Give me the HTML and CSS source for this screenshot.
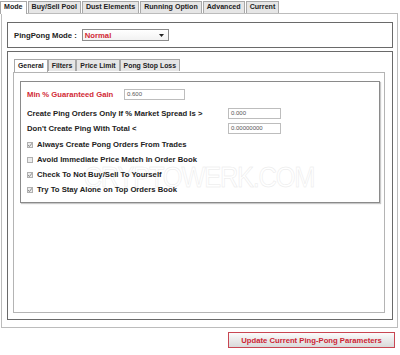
FILE: index.html
```html
<!DOCTYPE html>
<html>
<head>
<meta charset="utf-8">
<link rel="stylesheet" href="styles.css">
</head>
<body>
<div class="tabs">
  <div class="tab active">Mode</div>
  <div class="tab">Buy/Sell Pool</div>
  <div class="tab">Dust Elements</div>
  <div class="tab">Running Option</div>
  <div class="tab">Advanced</div>
  <div class="tab">Current</div>
</div>
<div class="panel">
  <div class="box mode-box">
    <span class="mode-label">PingPong Mode :</span>
    <div class="select">
      <span class="select-text">Normal</span>
      <svg class="arrow" width="5" height="3" viewBox="0 0 5 3"><path d="M0 0H5L2.5 3Z" fill="#222"/></svg>
    </div>
  </div>
  <div class="box main-box">
    <div class="subtabs">
      <div class="tab subtab active">General</div>
      <div class="tab subtab">Filters</div>
      <div class="tab subtab">Price Limit</div>
      <div class="tab subtab">Pong Stop Loss</div>
    </div>
    <div class="subpanel">
      <div class="content">
        <div class="watermark">CRYPTOWERK.COM</div>
        <div class="row">
          <span class="label label-short red">Min % Guaranteed Gain</span>
          <span class="input input-wide">0.600</span>
        </div>
        <div class="row row-gap">
          <span class="label">Create Ping Orders Only If % Market Spread Is &gt;</span>
          <span class="input">0.000</span>
        </div>
        <div class="row">
          <span class="label">Don't Create Ping With Total &lt;</span>
          <span class="input">0.00000000</span>
        </div>
        <div class="row cb-row cb-first">
          <span class="cb"><svg width="6" height="6" viewBox="0 0 6 6"><path d="M1 3L2.4 4.6L5 1.2" fill="none" stroke="#8a8a8a" stroke-width="1"/></svg></span>
          <span>Always Create Pong Orders From Trades</span>
        </div>
        <div class="row cb-row">
          <span class="cb"></span>
          <span>Avoid Immediate Price Match In Order Book</span>
        </div>
        <div class="row cb-row">
          <span class="cb"><svg width="6" height="6" viewBox="0 0 6 6"><path d="M1 3L2.4 4.6L5 1.2" fill="none" stroke="#8a8a8a" stroke-width="1"/></svg></span>
          <span>Check To Not Buy/Sell To Yourself</span>
        </div>
        <div class="row cb-row">
          <span class="cb"><svg width="6" height="6" viewBox="0 0 6 6"><path d="M1 3L2.4 4.6L5 1.2" fill="none" stroke="#8a8a8a" stroke-width="1"/></svg></span>
          <span>Try To Stay Alone on Top Orders Book</span>
        </div>
      </div>
    </div>
  </div>
</div>
<div class="footer">
  <button class="update-btn">Update Current Ping-Pong Parameters</button>
</div>
</body>
</html>
```
FILE: styles.css
```css
* { box-sizing: border-box; }
body {
  margin: 0;
  background: #fff;
  font-family: "Liberation Sans", Arial, sans-serif;
  font-size: 7.7px;
  font-weight: bold;
  color: #222;
}
.tabs {
  display: flex;
  height: 13px;
  padding-top: 1px;
}
.tab {
  height: 12px;
  padding: 0 3px;
  border: 1px solid #a8a8a8;
  border-bottom: none;
  background: #e6e6e6;
  margin-right: 1px;
  font-size: 7.1px;
  line-height: 11px;
  white-space: nowrap;
}
.tab.active {
  background: #fff;
  height: 13px;
  position: relative;
  z-index: 1;
}
.subtab { font-size: 6.9px; margin-right: 0; }
.panel {
  margin-left: 1px;
  width: 397px;
  height: 315px;
  border: 1px solid #bcbcbc;
  padding: 8px 4px 7px 5px;
}
.box {
  border: 1px solid #6a6a6a;
}
.mode-box {
  height: 26px;
  display: flex;
  align-items: center;
  padding-left: 6px;
}
.mode-label { margin-right: 5px; }
.select {
  width: 87px;
  height: 12px;
  border: 1px solid #8c8c8c;
  background: linear-gradient(#fff, #f2f2f2);
  display: flex;
  align-items: center;
  justify-content: space-between;
  padding: 0 4px 0 2px;
}
.select-text { color: #d22a36; }
.main-box {
  margin-top: 3px;
  height: 269px;
  padding: 7px 7px 7px 5px;
}
.subtabs {
  display: flex;
  height: 13px;
  margin-left: 1px;
}
.subpanel {
  height: 241px;
  border: 1px solid #b4b4b4;
  padding: 8px 4px 0 6px;
}
.content {
  position: relative;
  height: 122px;
  border: 1px solid #8a8a8a;
  box-shadow: 1px 1px 1px #c8c8c8;
  padding: 5px 0 0 6px;
}
.row {
  position: relative;
  display: flex;
  align-items: center;
  height: 15px;
  white-space: nowrap;
}
.row-gap { margin-top: 4px; }
.label { width: 201px; }
.label-short { width: 97px; }
.red { color: #d22a36; }
.input {
  width: 53px;
  height: 11px;
  border: 1px solid #bdbdbd;
  background: #fff;
  font-weight: normal;
  font-size: 6px;
  color: #555;
  padding-left: 2px;
  line-height: 9px;
}
.input-wide { width: 61px; }
.cb-first { margin-top: 1px; }
.cb {
  width: 6px;
  height: 6px;
  border: 1px solid #b0b0b0;
  background: #ececec;
  margin-right: 4px;
  display: flex;
  align-items: center;
  justify-content: center;
  overflow: hidden;
}
.cb svg { flex: none; }
.watermark {
  position: absolute;
  right: 65px;
  top: 80px;
  font-size: 30px;
  line-height: 30px;
  font-weight: normal;
  color: #fff;
  -webkit-text-stroke: 0.5px #e8e8e8;
  letter-spacing: -1.5px;
  transform: scaleX(0.85);
  transform-origin: right center;
  white-space: nowrap;
}
.footer {
  display: flex;
  justify-content: flex-end;
  padding: 4px 5px 0 0;
}
.update-btn {
  width: 167px;
  height: 16px;
  border: 1px solid #c84652;
  background: linear-gradient(#fbfbfb, #d9d9d9);
  color: #cc2434;
  font-family: "Liberation Sans", Arial, sans-serif;
  font-weight: bold;
  font-size: 7.7px;
  padding: 0;
}
```
